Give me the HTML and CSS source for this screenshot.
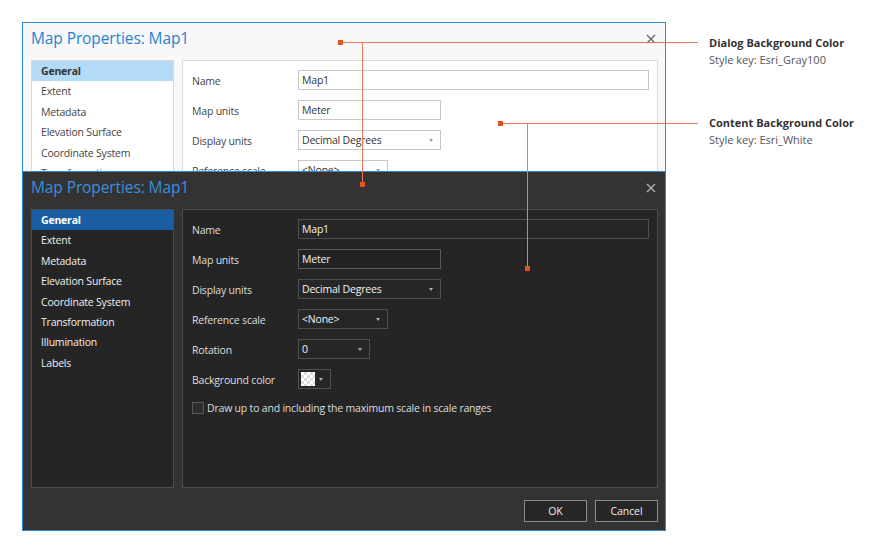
FILE: index.html
```html
<!DOCTYPE html>
<html>
<head>
<meta charset="utf-8">
<link rel="stylesheet" href="styles.css">
</head>
<body>
<div class="page">
  <div class="dialogs">
    <div class="clip">
      <div class="dlg light">
        <div class="dlg-head">
          <span class="title">Map Properties: Map1</span>
          <svg class="close" width="10" height="10" viewBox="0 0 10 10"><path d="M1 1L9 9M9 1L1 9"/></svg>
        </div>
        <div class="dlg-body">
          <div class="nav">
            <div class="nav-item sel">General</div>
            <div class="nav-item">Extent</div>
            <div class="nav-item">Metadata</div>
            <div class="nav-item">Elevation Surface</div>
            <div class="nav-item">Coordinate System</div>
            <div class="nav-item">Transformation</div>
          </div>
          <div class="content">
            <div class="row"><span class="lbl">Name</span><div class="field w-full">Map1</div></div>
            <div class="row"><span class="lbl">Map units</span><div class="field w-143">Meter</div></div>
            <div class="row"><span class="lbl">Display units</span><div class="field w-143 dd">Decimal Degrees</div></div>
            <div class="row"><span class="lbl">Reference scale</span><div class="field w-90 dd">&lt;None&gt;</div></div>
          </div>
        </div>
      </div>
    </div>
    <div class="dlg dark">
      <div class="dlg-head">
        <span class="title">Map Properties: Map1</span>
        <svg class="close" width="10" height="10" viewBox="0 0 10 10"><path d="M1 1L9 9M9 1L1 9"/></svg>
      </div>
      <div class="dlg-body">
        <div class="nav">
          <div class="nav-item sel">General</div>
          <div class="nav-item">Extent</div>
          <div class="nav-item">Metadata</div>
          <div class="nav-item">Elevation Surface</div>
          <div class="nav-item">Coordinate System</div>
          <div class="nav-item">Transformation</div>
          <div class="nav-item">Illumination</div>
          <div class="nav-item">Labels</div>
        </div>
        <div class="content">
          <div class="row"><span class="lbl">Name</span><div class="field w-full">Map1</div></div>
          <div class="row"><span class="lbl">Map units</span><div class="field w-143 hl">Meter</div></div>
          <div class="row"><span class="lbl">Display units</span><div class="field w-143 dd">Decimal Degrees</div></div>
          <div class="row"><span class="lbl">Reference scale</span><div class="field w-90 dd">&lt;None&gt;</div></div>
          <div class="row"><span class="lbl">Rotation</span><div class="field w-72 dd">0</div></div>
          <div class="row"><span class="lbl">Background color</span><div class="field w-33 dd swatch-field"><span class="swatch"></span></div></div>
          <div class="check-row"><span class="box"></span><span>Draw up to and including the maximum scale in scale ranges</span></div>
        </div>
      </div>
      <div class="dlg-foot">
        <button class="btn">OK</button>
        <button class="btn">Cancel</button>
      </div>
    </div>
  </div>
  <div class="notes">
    <div class="note first">
      <div class="note-title">Dialog Background Color</div>
      <div class="note-key">Style key: Esri_Gray100</div>
    </div>
    <div class="note second">
      <div class="note-title">Content Background Color</div>
      <div class="note-key">Style key: Esri_White</div>
    </div>
  </div>
  <svg class="callouts" width="877" height="554" viewBox="0 0 877 554">
    <g stroke="#ec7a55" stroke-width="1" fill="none">
      <path d="M340 42.5H698"/>
      <path d="M362.5 42V184"/>
      <path d="M500 123.5H698"/>
      <path d="M527.5 123V268"/>
    </g>
    <g fill="#e4521f">
      <rect x="338" y="40" width="5" height="5"/>
      <rect x="360" y="182" width="5" height="5"/>
      <rect x="498" y="121" width="5" height="5"/>
      <rect x="525" y="266" width="5" height="5"/>
    </g>
  </svg>
</div>
</body>
</html>
```

FILE: styles.css
```css
* { box-sizing: border-box; }
html, body { margin: 0; padding: 0; background: #ffffff; }
body {
  font-family: "Open Sans", "Noto Sans", sans-serif;
  font-size: 10.5px;
  letter-spacing: -0.2px;
  width: 877px;
  height: 554px;
  overflow: hidden;
}
.page {
  position: relative;
  display: flex;
  padding: 22px 0 0 22px;
  width: 877px;
  height: 554px;
}
.dialogs {
  width: 644px;
  display: flex;
  flex-direction: column;
}
.clip {
  height: 149px;
  overflow: hidden;
}
.dlg {
  width: 644px;
  border: 1px solid #2b8ad8;
  display: flex;
  flex-direction: column;
}
.light { background: #f8f8f8; color: #333; border-bottom: none; height: 149px; }
.dark { background: #333333; color: #e6e6e6; height: 360px; }

.dlg-head {
  height: 37px;
  flex: none;
  display: flex;
  justify-content: space-between;
  align-items: flex-start;
  padding: 4px 9px 0 8px;
}
.title {
  font-size: 15.5px;
  line-height: 22px;
  color: #2683d3;
  letter-spacing: -0.1px;
}
.dark .title { color: #3a90dc; }
.close { margin-top: 7px; }
.close path { stroke-width: 1.3; fill: none; }
.light .close path { stroke: #666; }
.dark .close path { stroke: #b5b5b5; }

.dlg-body {
  display: flex;
  gap: 8px;
  padding: 0 7px 0 8px;
  height: 279px;
  flex: none;
}
.nav {
  width: 143px;
  border: 1px solid;
  display: flex;
  flex-direction: column;
}
.light .nav { background: #ffffff; border-color: #d9d9d9; }
.dark .nav { background: #252525; border-color: #4d4d4d; }
.nav-item {
  height: 20.4px;
  line-height: 20.4px;
  padding-left: 9px;
  white-space: nowrap;
  flex: none;
}
.light .nav-item { color: #444; }
.dark .nav-item { color: #f0f0f0; }
.nav-item.sel { font-weight: 700; }
.light .nav-item.sel { background: #b3dbf8; color: #333; }
.dark .nav-item.sel { background: #195da3; color: #fff; }

.content {
  width: 476px;
  border: 1px solid;
  padding: 9px 8px 0 9px;
  display: flex;
  flex-direction: column;
  gap: 10px;
}
.light .content { background: #ffffff; border-color: #d9d9d9; }
.dark .content { background: #252525; border-color: #4d4d4d; }
.row {
  display: flex;
  align-items: center;
  height: 20px;
  flex: none;
}
.lbl {
  width: 106px;
  flex: none;
  padding-top: 1px;
}
.light .lbl { color: #444; }
.dark .lbl { color: #dedede; }
.field {
  position: relative;
  height: 20px;
  line-height: 18px;
  border: 1px solid;
  padding-left: 3px;
  white-space: nowrap;
}
.light .field { background: #fff; border-color: #c8c8c8; color: #333; }
.dark .field { background: #262626; border-color: #4f4f4f; color: #f2f2f2; }
.dark .field.hl { border-color: #5a5a5a; background: #222; }
.w-full { flex: 1; }
.w-143 { width: 143px; }
.w-90 { width: 90px; }
.w-72 { width: 72px; }
.w-33 { width: 33px; }
.dd::after {
  content: "";
  position: absolute;
  right: 7px;
  top: 8px;
  border-left: 2px solid transparent;
  border-right: 2px solid transparent;
  border-top: 3px solid #999;
}
.dark .dd::after { border-top-color: #b0b0b0; }
.swatch-field { padding: 2px; }
.swatch {
  display: block;
  width: 14px;
  height: 14px;
  background-color: #fff;
  background-image:
    linear-gradient(45deg, #dcdcdc 25%, transparent 25%, transparent 75%, #dcdcdc 75%),
    linear-gradient(45deg, #dcdcdc 25%, transparent 25%, transparent 75%, #dcdcdc 75%);
  background-size: 6px 6px;
  background-position: 0 0, 3px 3px;
}
.check-row {
  display: flex;
  align-items: center;
  gap: 3px;
  height: 14px;
  margin-top: 2px;
  flex: none;
}
.box {
  width: 12px;
  height: 12px;
  border: 1px solid;
  flex: none;
}
.light .box { border-color: #aaa; background: #fff; }
.dark .box { border-color: #555; background: #2c2c2c; }
.dark .check-row { color: #dedede; }

.dlg-foot {
  display: flex;
  justify-content: flex-end;
  gap: 8px;
  padding: 12px 7px 0 0;
}
.btn {
  font-family: "Open Sans", "Noto Sans", sans-serif;
  font-size: 10.5px;
  letter-spacing: -0.1px;
  width: 63px;
  height: 22px;
  background: #262626;
  color: #f0f0f0;
  border: 1px solid #8c8c8c;
  padding: 0;
}

.notes {
  margin-left: 43px;
  display: flex;
  flex-direction: column;
  letter-spacing: 0;
}
.note.first { margin-top: 13px; }
.note.second { margin-top: 46px; }
.note-title {
  font-weight: 700;
  font-size: 11px;
  line-height: 16px;
  color: #333;
}
.note-key {
  font-size: 11px;
  line-height: 18px;
  color: #555;
}
.callouts {
  position: absolute;
  left: 0;
  top: 0;
  pointer-events: none;
}
```
